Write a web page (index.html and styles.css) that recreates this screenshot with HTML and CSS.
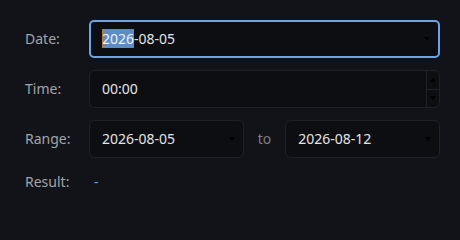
FILE: index.html
```html
<!DOCTYPE html>
<html>
<head>
<meta charset="utf-8">
<link rel="stylesheet" href="styles.css">
</head>
<body>
<div class="form">
  <div class="label">Date:</div>
  <div class="field focused">
    <span class="value"><span class="sel"><span class="caret"></span>2026</span>-08-05</span>
    <span class="arrow"></span>
  </div>

  <div class="label">Time:</div>
  <div class="field spin-field">
    <span class="value">00:00</span>
    <span class="spinner">
      <span class="spin-btn"><span class="up"></span></span>
      <span class="spin-btn"><span class="down"></span></span>
    </span>
  </div>

  <div class="label">Range:</div>
  <div class="range">
    <div class="field">
      <span class="value">2026-08-05</span>
      <span class="arrow"></span>
    </div>
    <span class="to">to</span>
    <div class="field">
      <span class="value">2026-08-12</span>
      <span class="arrow"></span>
    </div>
  </div>

  <div class="label result-label">Result:</div>
  <div class="result">-</div>
</div>
</body>
</html>
```
FILE: styles.css
```css
html, body {
  margin: 0;
  padding: 0;
  background: #121318;
  width: 460px;
  height: 240px;
  overflow: hidden;
}
body {
  font-family: "Noto Sans", "Open Sans", sans-serif;
  font-size: 14px;
  color: #e4e4e6;
}
.form {
  display: grid;
  grid-template-columns: 52px 1fr;
  grid-template-rows: 38px 38px 38px 24px;
  column-gap: 12px;
  row-gap: 12px;
  padding: 20px 20px 0 25px;
  align-items: center;
}
.label {
  color: #a3a5aa;
  line-height: 20px;
}
.field {
  position: relative;
  height: 38px;
  box-sizing: border-box;
  display: flex;
  align-items: center;
  background: #0d0e12;
  border: 1px solid #1f2127;
  border-radius: 6px;
  padding: 0 12px;
}
.field.focused {
  border: 2px solid #6aa6e6;
  border-radius: 5px;
  padding: 0 11px;
}
.value {
  flex: 1;
  line-height: 20px;
  white-space: nowrap;
}
.sel {
  position: relative;
  display: inline-block;
  background: #5d8cc4;
  color: #eef2f8;
  line-height: 19px;
}
.caret {
  position: absolute;
  left: 0;
  top: 0;
  bottom: 0;
  width: 1px;
  background: #c07c34;
}
.arrow {
  width: 0;
  height: 0;
  border-left: 3.5px solid transparent;
  border-right: 3.5px solid transparent;
  border-top: 4px solid #000000;
  margin-right: -4px;
}
.focused .arrow {
  margin-right: -3px;
}
.spin-field {
  padding-right: 0;
}
.spinner {
  align-self: stretch;
  width: 12px;
  display: flex;
  flex-direction: column;
  border-left: 1px solid #1f2127;
}
.spin-btn {
  flex: 1;
  display: flex;
  align-items: center;
  justify-content: center;
}
.spin-btn + .spin-btn {
  border-top: 1px solid #1f2127;
}
.up {
  width: 0;
  height: 0;
  border-left: 3.5px solid transparent;
  border-right: 3.5px solid transparent;
  border-bottom: 4px solid #000000;
}
.down {
  width: 0;
  height: 0;
  border-left: 3.5px solid transparent;
  border-right: 3.5px solid transparent;
  border-top: 4px solid #000000;
}
.range {
  display: flex;
  align-items: center;
  gap: 14px;
}
.range .field {
  flex: 1;
}
.to {
  color: #7b7e86;
  line-height: 20px;
}
.result {
  color: #6aa6e6;
  padding-left: 5px;
  line-height: 20px;
}
```
